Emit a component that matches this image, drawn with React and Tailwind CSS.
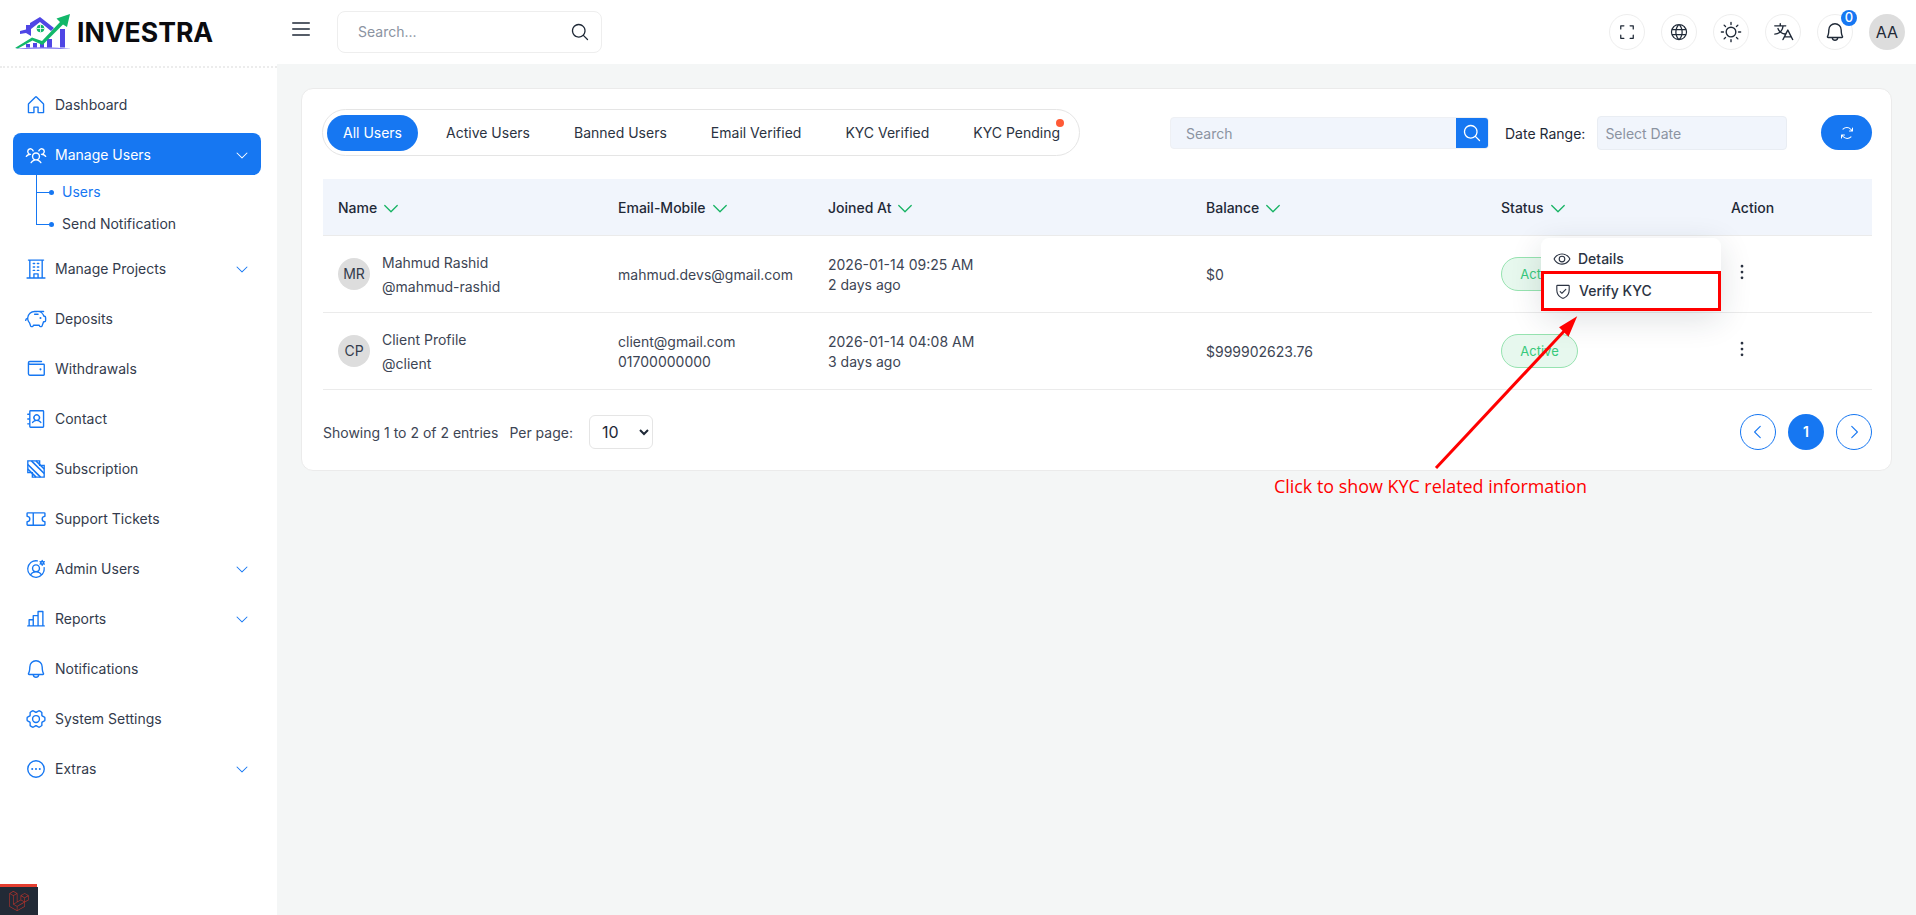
import React from "react";
import {
  PiHouse, PiUsersThree, PiBuilding, PiPiggyBank, PiWallet, PiAddressBook, PiTicket,
  PiUserCircleGear, PiChartBar, PiBell, PiGearSix, PiDotsThreeCircle, PiCaretDown,
  PiMagnifyingGlass, PiList, PiCornersOut, PiGlobe, PiSun, PiTranslate, PiArrowsClockwise,
  PiEye, PiShieldCheck, PiDotsThreeVerticalBold, PiCaretLeft, PiCaretRight,
} from "react-icons/pi";
import { SiLaravel } from "react-icons/si";

function Logo() {
  return (
    <svg width="60" height="40" viewBox="0 0 60 40" className="shrink-0">
      <path d="M1 37 Q30 33.5 59 37 Q30 35.8 1 37Z" fill="#6d62ee" />
      <path d="M7 19 L13 17.5 L13 13 L17 13 L17 11 L27 5 L41 16 L38 19 L27 10 L18 17 L18 24 L13 21 L7 22Z" fill="#4f46e5" />
      <circle cx="27.5" cy="16.5" r="3.8" fill="#12b76a" />
      <path d="M27.5 13v7M24 16.5h7" stroke="#fff" strokeWidth="0.8" />
      <rect x="13" y="32" width="4" height="3.5" fill="#4f46e5" />
      <rect x="20" y="31" width="4" height="4.5" fill="#4f46e5" />
      <rect x="27" y="31" width="4" height="4.5" fill="#4f46e5" />
      <rect x="34" y="27" width="5" height="8.5" fill="#4f46e5" />
      <rect x="47" y="17" width="5" height="18.5" fill="#4f46e5" />
      <path d="M2 36 L19 25.5 L29 29 L47 10 L43.5 6.5 L57 2 L54 15 L50 12.5 L29.5 33 L19.5 28.5 L5 36.5Z" fill="#12b76a" />
    </svg>
  );
}

function SubscriptionIcon() {
  return (
    <svg width="20" height="20" viewBox="0 0 22 22" fill="none" stroke="#1677f2" strokeWidth="1.5" className="ml-px">
      <path d="M2 2h13v5h5v13H7v-5H2z" />
      <path d="M2 6l14 14M2 11l9 9M6 2l14 14M11 2l9 9" strokeWidth="1.8" />
    </svg>
  );
}

const NavItem = ({ icon, label, caret }) => (
  <div className="flex h-[42px] items-center rounded-lg pl-[12px] pr-[11px] text-sm text-[#333b4c]">
    <span className="flex w-[30px] shrink-0 text-[#1677f2]">{icon}</span>
    <span className="flex-1">{label}</span>
    {caret && <PiCaretDown size={16} className="text-[#1677f2]" />}
  </div>
);

function Sidebar() {
  const i = 22;
  return (
    <aside className="w-[277px] shrink-0 bg-white">
      <div className="mt-[2px] border-t-2 border-dotted border-[#ececec]" />
      <nav className="flex flex-col gap-2 pl-[13px] pr-[16px] pt-[16px]">
        <div className="-mb-px">
          <NavItem icon={<PiHouse size={i} />} label="Dashboard" />
        </div>
        <div>
          <div className="flex h-[42px] items-center rounded-lg bg-[#1677f2] pl-[12px] pr-[11px] pt-[2px] text-sm text-white">
            <span className="flex w-[30px] shrink-0"><PiUsersThree size={i} /></span>
            <span className="flex-1">Manage Users</span>
            <PiCaretDown size={16} />
          </div>
          <div className="relative ml-[23px] pt-[1px] text-sm">
            <div className="absolute left-0 top-0 h-[49px] w-px bg-[#1677f2]" />
            <div className="flex h-8 items-center">
              <span className="h-px w-[13px] bg-[#1677f2]" />
              <span className="h-[5px] w-[5px] rounded-full bg-[#1677f2]" />
              <span className="ml-[8px] text-[#1677f2]">Users</span>
            </div>
            <div className="flex h-8 items-center">
              <span className="h-px w-[13px] bg-[#1677f2]" />
              <span className="h-[5px] w-[5px] rounded-full bg-[#1677f2]" />
              <span className="ml-[8px] text-[#333b4c]">Send Notification</span>
            </div>
          </div>
        </div>
        <NavItem icon={<PiBuilding size={i} />} label="Manage Projects" caret />
        <NavItem icon={<PiPiggyBank size={i} />} label="Deposits" />
        <NavItem icon={<PiWallet size={i} />} label="Withdrawals" />
        <NavItem icon={<PiAddressBook size={i} />} label="Contact" />
        <NavItem icon={<SubscriptionIcon />} label="Subscription" />
        <NavItem icon={<PiTicket size={i} />} label="Support Tickets" />
        <NavItem icon={<PiUserCircleGear size={i} />} label="Admin Users" caret />
        <NavItem icon={<PiChartBar size={i} />} label="Reports" caret />
        <NavItem icon={<PiBell size={i} />} label="Notifications" />
        <NavItem icon={<PiGearSix size={i} />} label="System Settings" />
        <NavItem icon={<PiDotsThreeCircle size={i} />} label="Extras" caret />
      </nav>
    </aside>
  );
}

const RoundBtn = ({ children }) => (
  <div className="relative flex h-9 w-9 items-center justify-center rounded-full border border-[#eeeeee] bg-white text-[#1f2937]">
    {children}
  </div>
);

function Header() {
  return (
    <header className="flex h-16 items-center bg-white pr-[11px]">
      <div className="flex w-[278px] shrink-0 items-center pl-[13px]">
        <Logo />
        <span className="ml-[4px] text-[26.6px] font-bold leading-none text-[#0b0b0f]">INVESTRA</span>
      </div>
      <PiList size={24} className="ml-[11px] -mt-[7px] text-[#1f2937]" />
      <div className="ml-[24px] flex h-[42px] w-[265px] items-center justify-between rounded-lg border border-[#eeeeee] pl-[20px] pr-[11px] text-sm text-[#8b93a1]">
        <span>Search...</span>
        <PiMagnifyingGlass size={20} className="text-[#1f2937]" />
      </div>
      <div className="ml-auto flex items-center gap-4">
        <RoundBtn><PiCornersOut size={20} /></RoundBtn>
        <RoundBtn><PiGlobe size={20} /></RoundBtn>
        <RoundBtn><PiSun size={22} /></RoundBtn>
        <RoundBtn><PiTranslate size={22} /></RoundBtn>
        <RoundBtn>
          <PiBell size={22} />
          <span className="absolute -right-[5px] -top-[5px] flex h-4 w-4 items-center justify-center rounded-full bg-[#1677f2] text-[13px] font-medium text-white">0</span>
        </RoundBtn>
        <div className="flex h-9 w-9 items-center justify-center rounded-full bg-[#dddddd] text-base text-[#1f2937]">AA</div>
      </div>
    </header>
  );
}

const Tabs = () => {
  const names = ["Active Users", "Banned Users", "Email Verified", "KYC Verified"];
  return (
    <div className="-ml-px flex h-[47px] w-[758px] items-center gap-3 whitespace-nowrap rounded-full border border-[#e5e5e5] p-1 text-sm text-[#2b3342]">
      <span className="flex h-9 items-center rounded-full bg-[#1677f2] px-4 pt-px text-white">All Users</span>
      {names.map((n) => (
        <span key={n} className="px-4 pt-px">{n}</span>
      ))}
      <span className="relative px-4 pt-px">
        KYC Pending
        <span className="absolute right-[12px] -top-[3px] h-2 w-2 rounded-full bg-[#ff5a36]" />
      </span>
    </div>
  );
};

const Th = ({ children, caret = true }) => (
  <th className="px-[15px] pt-[2px] text-left text-sm font-medium text-[#1f2937]">
    <span className="flex items-center gap-[4px]">
      {children}
      {caret && <PiCaretDown size={20} className="text-[#16b364]" />}
    </span>
  </th>
);

const Avatar = ({ t }) => (
  <div className="flex h-8 w-8 shrink-0 items-center justify-center rounded-full bg-[#dddddd] text-sm text-[#333b4c]">{t}</div>
);

const Status = () => (
  <span className="flex h-[34px] w-[77px] items-center justify-center rounded-full border border-[#96e3b0] bg-[#e7f8ee] pt-px text-[13px] text-[#37c97b]">Active</span>
);

function Row({ avatar, name, handle, mail, time, ago, balance, menu }) {
  return (
    <tr className="h-[77px] border-b border-[#ebebeb] text-sm text-[#3d4554]">
      <td className="px-[15px]">
        <div className="flex items-center gap-3">
          <Avatar t={avatar} />
          <div className="pt-[2px] leading-6">
            <div>{name}</div>
            <div>{handle}</div>
          </div>
        </div>
      </td>
      <td className="px-[15px] pt-[2px] leading-5">{mail}</td>
      <td className="px-[15px] pt-[2px] leading-5">
        <div>{time}</div>
        <div>{ago}</div>
      </td>
      <td className="px-[15px] pt-[2px]">{balance}</td>
      <td className="px-[15px]"><Status /></td>
      <td className="px-[15px]">
        <div className="relative mb-1 flex h-6 items-center">
          <PiDotsThreeVerticalBold size={22} className="text-[#2b3342]" />
          {menu && (
            <div className="absolute right-[136px] top-[-22px] z-10 w-[180px] rounded-lg bg-white text-sm font-medium text-[#2b3342] shadow-[0_8px_32px_rgba(30,40,60,0.14)]">
              <div className="flex h-[33px] items-center gap-[7px] pl-[12px] pt-[10px]">
                <PiEye size={18} />
                Details
              </div>
              <div className="flex h-[40px] items-center gap-[7px] border-[3px] border-[#ff0000] pl-[10px]">
                <PiShieldCheck size={18} />
                Verify KYC
              </div>
            </div>
          )}
        </div>
      </td>
    </tr>
  );
}

function Card() {
  return (
    <div className="rounded-xl border border-[#ebebeb] bg-white pl-[21px] pr-[19px] pt-[20px]">
      <div className="flex items-center">
        <Tabs />
        <div className="ml-[90px] flex h-8 w-[319px] overflow-hidden rounded border border-[#eef0f4] bg-[#f1f5fc] text-sm text-[#8b93a1]">
          <span className="flex flex-1 items-center pl-[15px] pt-[2px]">Search</span>
          <span className="flex w-8 items-center justify-center bg-[#1677f2] text-white"><PiMagnifyingGlass size={20} /></span>
        </div>
        <span className="ml-4 pt-[2px] text-sm text-[#1f2937]">Date Range:</span>
        <div className="ml-[12px] flex h-[34px] w-[190px] items-center rounded border border-[#e9edf3] bg-[#f1f5fc] pl-[7px] pt-[2px] text-sm text-[#8b93a1]">Select Date</div>
        <div className="ml-auto flex h-[35px] w-[51px] items-center justify-center rounded-full bg-[#1677f2] text-white"><PiArrowsClockwise size={16} /></div>
      </div>
      <table className="mt-[23px] w-full table-fixed border-collapse">
        <colgroup>
          <col className="w-[280px]" />
          <col className="w-[210px]" />
          <col className="w-[378px]" />
          <col className="w-[295px]" />
          <col className="w-[230px]" />
          <col className="w-[156px]" />
        </colgroup>
        <thead>
          <tr className="h-[56px] border-b border-[#ebebeb] bg-[#f1f5fc]">
            <Th>Name</Th>
            <Th>Email-Mobile</Th>
            <Th>Joined At</Th>
            <Th>Balance</Th>
            <Th>Status</Th>
            <Th caret={false}>Action</Th>
          </tr>
        </thead>
        <tbody>
          <Row avatar="MR" name="Mahmud Rashid" handle="@mahmud-rashid" mail="mahmud.devs@gmail.com"
            time="2026-01-14 09:25 AM" ago="2 days ago" balance="$0" menu />
          <Row avatar="CP" name="Client Profile" handle="@client"
            mail={<><div>client@gmail.com</div><div>01700000000</div></>}
            time="2026-01-14 04:08 AM" ago="3 days ago" balance="$999902623.76" />
        </tbody>
      </table>
      <div className="flex items-center pb-5 pt-[24px] text-sm text-[#3d4554]">
        <span className="pt-[2px]">Showing 1 to 2 of 2 entries</span>
        <span className="ml-[11px] pt-[2px]">Per page:</span>
        <select defaultValue="10" className="ml-4 h-[34px] w-16 rounded-md border border-[#e5e5e5] pl-2 text-base text-[#1f2937]">
          <option>10</option>
        </select>
        <div className="ml-auto flex items-center gap-3">
          <span className="flex h-9 w-9 items-center justify-center rounded-full border border-[#1677f2] text-[#1677f2]"><PiCaretLeft size={18} /></span>
          <span className="flex h-9 w-9 items-center justify-center rounded-full bg-[#1677f2] font-semibold text-white">1</span>
          <span className="flex h-9 w-9 items-center justify-center rounded-full border border-[#1677f2] text-[#1677f2]"><PiCaretRight size={18} /></span>
        </div>
      </div>
    </div>
  );
}

export default function App() {
  return (
    <div className="relative h-[915px] w-full overflow-hidden bg-[#f4f6f6] font-[Inter,sans-serif]">
      <Header />
      <div className="flex h-[851px]">
        <Sidebar />
        <main className="flex-1 p-6">
          <Card />
        </main>
      </div>

      {/* annotation over the page */}
      <svg className="pointer-events-none absolute left-[1420px] top-[310px] z-20" width="170" height="170" viewBox="0 0 170 170">
        <path d="M16 158 L147 18" stroke="#ff0000" strokeWidth="3" />
        <path d="M154 10 L148 24 L141.5 17.5Z" fill="#ff0000" stroke="#ff0000" strokeWidth="3" />
      </svg>
      <span className="absolute left-[1274px] top-[473px] z-20 font-['Open_Sans',sans-serif] text-[17.9px] text-[#ff0000]">
        Click to show KYC related information
      </span>

      {/* debug badge */}
      <div className="absolute bottom-0 left-0 z-20 w-[38px]">
        <div className="h-[3px] w-[37px] bg-[#e53e30]" />
        <div className="flex h-[28px] items-center justify-center bg-[#222a36]">
          <SiLaravel size={20} className="text-[#b3332b]" />
        </div>
      </div>
    </div>
  );
}
